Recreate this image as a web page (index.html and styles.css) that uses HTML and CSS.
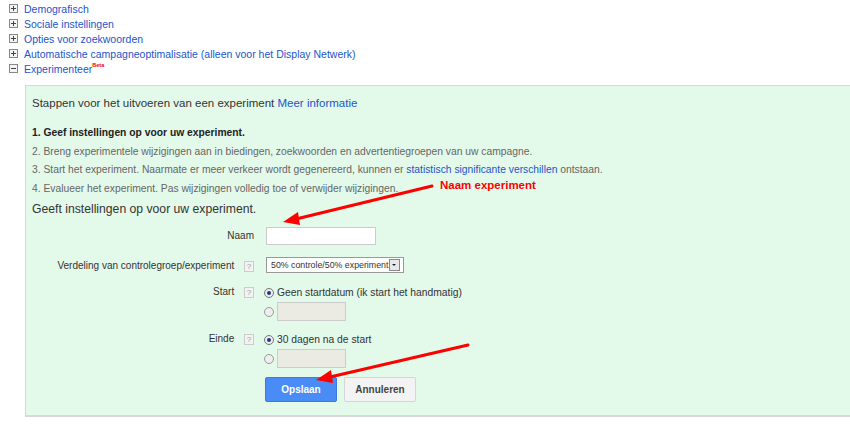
FILE: index.html
```html
<!DOCTYPE html>
<html lang="nl">
<head>
  <meta charset="UTF-8">
  <title>Campagne-instellingen - Experiment</title>
  <link rel="stylesheet" href="styles.css">
</head>
<body>

  <ul class="tree">
    <li><span class="toggle plus"></span><a href="#">Demografisch</a></li>
    <li><span class="toggle plus"></span><a href="#">Sociale instellingen</a></li>
    <li><span class="toggle plus"></span><a href="#">Opties voor zoekwoorden</a></li>
    <li><span class="toggle plus"></span><a href="#">Automatische campagneoptimalisatie (alleen voor het Display Netwerk)</a></li>
    <li><span class="toggle minus"></span><a href="#">Experimenteer</a><sup class="beta">Beta</sup></li>
  </ul>

  <div class="panel">
    <p class="intro">Stappen voor het uitvoeren van een experiment <a href="#">Meer informatie</a></p>

    <ol class="steps">
      <li class="current">1. Geef instellingen op voor uw experiment.</li>
      <li>2. Breng experimentele wijzigingen aan in biedingen, zoekwoorden en advertentiegroepen van uw campagne.</li>
      <li>3. Start het experiment. Naarmate er meer verkeer wordt gegenereerd, kunnen er <a href="#">statistisch significante verschillen</a> ontstaan.</li>
      <li>4. Evalueer het experiment. Pas wijzigingen volledig toe of verwijder wijzigingen.</li>
    </ol>

    <h3>Geeft instellingen op voor uw experiment.</h3>

    <div class="form">
      <div class="row row-naam">
        <div class="label">Naam</div>
        <div class="field"><span class="textbox"></span></div>
      </div>

      <div class="row row-split">
        <div class="label">Verdeling van controlegroep/experiment <span class="help">?</span></div>
        <div class="field">
          <span class="select">50% controle/50% experiment<span class="arrow"></span></span>
        </div>
      </div>

      <div class="row row-start">
        <div class="label">Start <span class="help">?</span></div>
        <div class="field">
          <div class="option"><span class="radio on"></span>Geen startdatum (ik start het handmatig)</div>
          <div class="option"><span class="radio"></span><span class="datebox"></span></div>
        </div>
      </div>

      <div class="row row-end">
        <div class="label">Einde <span class="help">?</span></div>
        <div class="field">
          <div class="option"><span class="radio on"></span>30 dagen na de start</div>
          <div class="option"><span class="radio"></span><span class="datebox"></span></div>
        </div>
      </div>

      <div class="buttons">
        <button class="btn primary">Opslaan</button>
        <button class="btn">Annuleren</button>
      </div>
    </div>
  </div>

  <!-- aanwijzingen -->
  <div class="note">Naam experiment</div>
  <svg class="arrows" width="850" height="429" viewBox="0 0 850 429">
    <g stroke="#f00" stroke-width="3" stroke-linecap="round" fill="none">
      <line x1="432" y1="186" x2="296" y2="219"/>
      <line x1="468" y1="345" x2="330" y2="377"/>
    </g>
    <g fill="#f00">
      <polygon points="283,222 298,212 300,225"/>
      <polygon points="316,380 331,370 333,383"/>
    </g>
  </svg>

</body>
</html>
```

FILE: styles.css
```css
body {
  margin: 0;
  font-family: Arial, "Liberation Sans", sans-serif;
  font-size: 12px;
  color: #333;
  background-color: #fff;
  position: relative;
  height: 429px;
  overflow: hidden;
}
a {
  color: #2255cc;
  text-decoration: none;
}

/* uitklapbare lijst */
.tree {
  list-style: none;
  margin: 0;
  padding: 1px 0 0 9px;
}
.tree li {
  display: flex;
  align-items: center;
  height: 15px;
  font-size: 10.5px;
}
.toggle {
  width: 7px;
  height: 7px;
  border: 1px solid #888;
  background: #f4f4f4;
  margin-right: 6px;
  position: relative;
}
.toggle::before,
.toggle.plus::after {
  content: "";
  position: absolute;
  background: #444;
}
.toggle::before {
  left: 1px;
  top: 3px;
  width: 5px;
  height: 1px;
}
.toggle.plus::after {
  left: 3px;
  top: 1px;
  width: 1px;
  height: 5px;
}
.beta {
  font-size: 5.5px;
  color: #e00;
  font-weight: bold;
  align-self: flex-start;
  margin-top: 1px;
}

/* groen kader */
.panel {
  margin: 9px 0 0 25px;
  background-color: #e3f9ea;
  border: 1px solid #d8d8d8;
  border-right: none;
  border-bottom-width: 2px;
  height: 329px;
  padding: 0 0 0 6px;
}
.intro {
  margin: 10px 0 0;
  font-size: 11.5px;
  line-height: 15px;
}
.steps {
  list-style: none;
  margin: 13px 0 0;
  padding: 0;
}
.steps li {
  font-size: 10.3px;
  line-height: 18.5px;
  color: #666;
}
.steps li.current {
  color: #222;
  font-weight: bold;
}
h3 {
  margin: 3px 0 0;
  font-size: 12.2px;
  font-weight: normal;
  color: #333;
  line-height: 17px;
}

/* formulier */
.form {
  margin-top: 9px;
}
.row {
  display: grid;
  grid-template-columns: 222px auto;
  column-gap: 12px;
}
.label {
  text-align: right;
  font-size: 10px;
  line-height: 17px;
}
.help {
  display: inline-block;
  width: 8px;
  height: 9px;
  border: 1px solid #ccc;
  background: #f3f3f3;
  color: #999;
  font-size: 8px;
  line-height: 9px;
  text-align: center;
  margin-left: 7px;
  vertical-align: 0;
}
.textbox {
  display: block;
  width: 108px;
  height: 16px;
  background: #fff;
  border: 1px solid #ccc;
}
.row-split {
  margin-top: 12px;
}
.select {
  display: inline-flex;
  align-items: center;
  width: 132px;
  height: 14px;
  padding-left: 4px;
  background: #fff;
  border: 1px solid #999;
  font-size: 8.8px;
  position: relative;
}
.arrow {
  position: absolute;
  right: 3px;
  top: 1px;
  width: 9px;
  height: 10px;
  border: 1px solid #888;
  background: #e8e8e8;
}
.arrow::after {
  content: "";
  position: absolute;
  left: 2px;
  top: 4px;
  border-left: 2px solid transparent;
  border-right: 2px solid transparent;
  border-top: 2px solid #222;
}
.row-start {
  margin-top: 9px;
}
.row-end {
  margin-top: 9px;
}
.option {
  display: flex;
  align-items: center;
  height: 19px;
  font-size: 10.3px;
}
.radio {
  width: 8px;
  height: 8px;
  border: 1px solid #999;
  border-radius: 50%;
  background: #eee;
  margin: 0 3px 0 -2px;
  position: relative;
}
.radio.on {
  border-color: #777;
}
.radio.on::after {
  content: "";
  position: absolute;
  left: 2px;
  top: 2px;
  width: 4px;
  height: 4px;
  border-radius: 50%;
  background: #1a3a8a;
}
.datebox {
  width: 67px;
  height: 17px;
  background: #ebebe4;
  border: 1px solid #ccc;
}

.buttons {
  display: flex;
  gap: 7px;
  margin: 9px 0 0 233px;
}
.btn {
  height: 25px;
  width: 72px;
  font-family: Arial, "Liberation Sans", sans-serif;
  font-size: 10px;
  font-weight: bold;
  color: #444;
  background: #f3f3f3;
  border: 1px solid #d6d6d6;
  border-radius: 2px;
  padding: 0;
}
.btn.primary {
  color: #fff;
  background: #4a8cf6;
  border-color: #3b7ae3;
}

/* aanwijzingen */
.note {
  position: absolute;
  left: 440px;
  top: 179px;
  color: #f00;
  font-weight: bold;
  font-size: 11.5px;
}
.arrows {
  position: absolute;
  left: 0;
  top: 0;
  pointer-events: none;
}
```
